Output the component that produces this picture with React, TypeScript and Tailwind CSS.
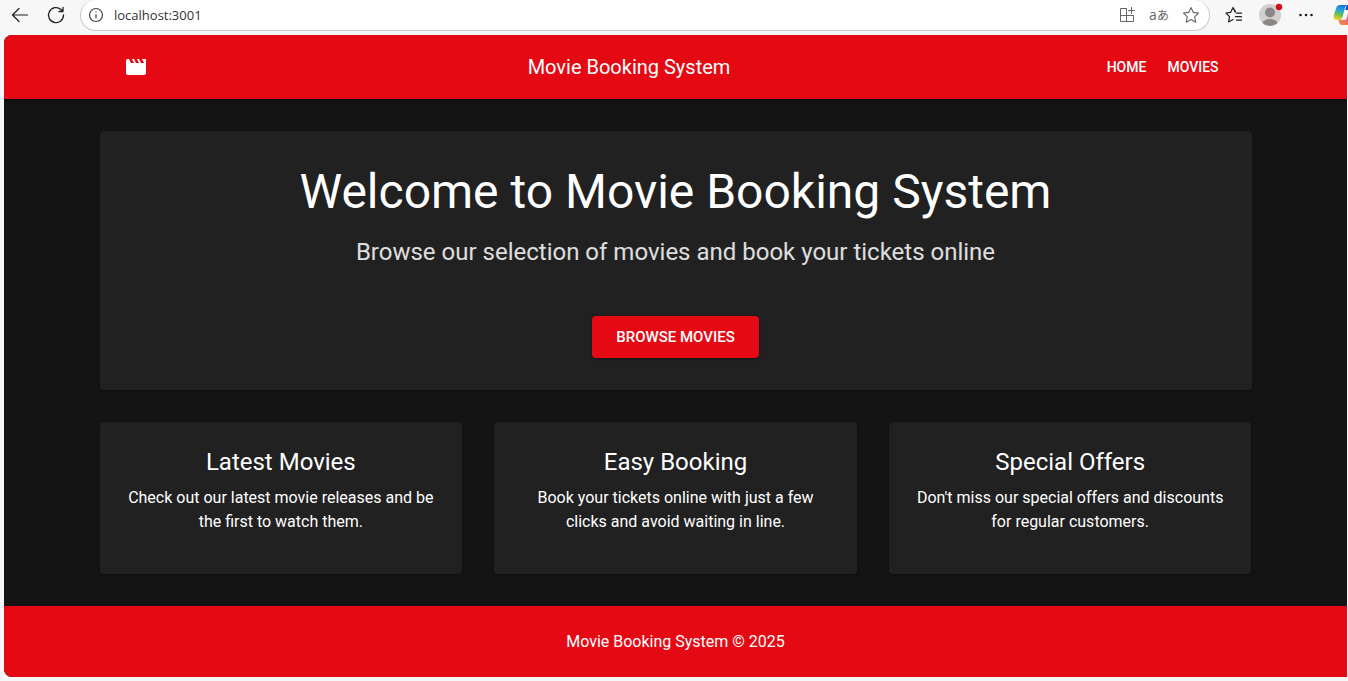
import type { ReactNode } from "react";

function LineIcon({ size, width = 1.2, children }: { size: number; width?: number; children: ReactNode }) {
  return (
    <svg
      width={size}
      height={size}
      viewBox={`0 0 ${size} ${size}`}
      fill="none"
      stroke="currentColor"
      strokeWidth={width}
      strokeLinecap="round"
      strokeLinejoin="round"
      aria-hidden="true"
      className="shrink-0"
    >
      {children}
    </svg>
  );
}

function CopilotIcon() {
  return (
    <svg width="24" height="22" viewBox="0 0 24 22" aria-hidden="true" className="shrink-0">
      <defs>
        <linearGradient id="left" x1="0.6" y1="0" x2="0.3" y2="1">
          <stop offset="0" stopColor="#1b6fe0" />
          <stop offset="0.35" stopColor="#22a6d8" />
          <stop offset="0.65" stopColor="#6cc04a" />
          <stop offset="1" stopColor="#f4d32c" />
        </linearGradient>
        <linearGradient id="right" x1="0.7" y1="0" x2="0.2" y2="1">
          <stop offset="0" stopColor="#a85be8" />
          <stop offset="0.5" stopColor="#ee5a90" />
          <stop offset="1" stopColor="#f58a35" />
        </linearGradient>
      </defs>
      <path d="M17 21H9c-2 0-2.600-1.500-3-3l-.5-2h2.500c2 0 3-1 3.500-3l1.500-5c.5-1.500 1.500-2 3-2h4.500c2.500 0 3.500 2 2.800 4.500L20.800 18c-.6 2-1.800 3-3.800 3Z" fill="url(#right)" />
      <path d="M7 1h8c-1.800 0-2.600 1.200-3 2.700L9.500 13c-.5 2-1.500 3-3.200 3H3.500C1 16 0 14 .7 11.500l2.500-7.500C3.800 2 5 1 7 1Z" fill="url(#left)" />
      <path d="M12.500 7c.4-.8 1.200-1 2-1h1.800l-2.700 8.500c-.4 1-1 1.500-2 1.500H8.800c.9-.6 1.400-1.500 1.700-2.500Z" fill="#f7f7f7" />
      <path d="M14.500 1c2 0 3.100 1.500 3.500 3l.5 2h-6.200l.7-2.500C13.300 2 13.700 1.200 14.500 1Z" fill="#1a4fc4" />
    </svg>
  );
}

function BrowserBar() {
  return (
    <div className="flex h-[35px] shrink-0 items-start overflow-hidden bg-[#f7f7f7] font-['Open_Sans',sans-serif] text-[#202020]">
      <div className="flex h-[30px] w-20 shrink-0 items-center gap-4 pl-[10px]">
        <button type="button" aria-label="Back">
          <LineIcon size={20}>
            <path d="M17.500 10H2.500M9 3.500 2.500 10 9 16.500" />
          </LineIcon>
        </button>
        <button type="button" aria-label="Refresh">
          <LineIcon size={20} width={1.3}>
            <path d="M17.500 10A7.500 7.500 0 1 1 15 4.500L17 6.500M17 2.500v4h-4" />
          </LineIcon>
        </button>
      </div>
      <div className="flex h-[31px] grow items-center rounded-full border border-t-0 border-[#c9c9c9] bg-white pr-[9px] pl-[7px]">
        <button type="button" aria-label="View site information" className="text-[#444444]">
          <LineIcon size={16}>
            <circle cx="8" cy="8" r="6.500" />
            <path d="M8 7.500v3.500M8 5v.2" />
          </LineIcon>
        </button>
        <input
          aria-label="Address"
          defaultValue="localhost:3001"
          className="min-w-0 grow bg-transparent pl-[10px] text-[13px] leading-5 text-[#333333] outline-none"
        />
        <div className="flex items-center gap-[14px] text-[#666666]">
          <button type="button" aria-label="App available">
            <LineIcon size={18} width={1}>
              <path d="M8.500 2.500h-6v13h13v-6M8.500 2.500v13M2.500 9.500h13M13.500 1.500v6M10.500 4.500h6" />
            </LineIcon>
          </button>
          <button
            type="button"
            aria-label="Translate"
            className="flex w-[18px] items-baseline justify-center font-['Open_Sans','Noto_Sans_CJK_JP',sans-serif] text-[14px] leading-5"
          >
            a<span className="text-[12px]">あ</span>
          </button>
          <button type="button" aria-label="Add to favorites">
            <LineIcon size={18} width={1.1}>
              <path d="m9 1.500 2.300 4.900 5.200.7-3.800 3.700 1 5.400L9 13.600l-4.700 2.600 1-5.400L1.500 7.100l5.200-.7Z" />
            </LineIcon>
          </button>
        </div>
      </div>
      <div className="flex h-[30px] shrink-0 items-center pl-[15px]">
        <button type="button" aria-label="Favorites">
          <LineIcon size={18}>
            <path d="M10.500 5.500 8 1.500 5.700 6.300 1 7l3.500 3.600-.9 5.400L8 13.500M8 1.500l2.200 4.700M11.500 7.200h5M10.500 10.700h6M11.500 14.200h5" />
          </LineIcon>
        </button>
        <button type="button" aria-label="Profile" className="ml-4">
          <svg width="24" height="24" viewBox="0 0 24 24" aria-hidden="true">
            <circle cx="11" cy="12" r="11" fill="#d2d0ce" />
            <circle cx="11" cy="9.500" r="5" fill="#8a8886" />
            <path d="M3.500 20c1-3 4-4 7.500-4s6.500 1 7.500 4A11 11 0 0 1 3.500 20Z" fill="#8a8886" />
            <circle cx="20" cy="4" r="3.200" fill="#d90d16" />
          </svg>
        </button>
        <button type="button" aria-label="Settings and more" className="ml-[14px]">
          <svg width="18" height="18" viewBox="0 0 18 18" fill="currentColor" aria-hidden="true">
            <circle cx="3.500" cy="9" r="1.300" />
            <circle cx="9" cy="9" r="1.300" />
            <circle cx="14.500" cy="9" r="1.300" />
          </svg>
        </button>
        <button type="button" aria-label="Copilot" className="-mr-[9px] ml-[18px]">
          <CopilotIcon />
        </button>
      </div>
    </div>
  );
}

const features = [
  { title: "Latest Movies", text: "Check out our latest movie releases and be the first to watch them." },
  { title: "Easy Booking", text: "Book your tickets online with just a few clicks and avoid waiting in line." },
  { title: "Special Offers", text: "Don't miss our special offers and discounts for regular customers." },
];

export default function App() {
  return (
    <div className="flex min-h-screen flex-col bg-[#f7f7f7]">
      <BrowserBar />
      <div className="mr-px mb-1 ml-1 flex grow flex-col overflow-hidden rounded-l-lg bg-[#141414] font-[Roboto,sans-serif] text-white">
        <header className="bg-[#e50914] shadow-sm shadow-black/40">
          <div className="mx-auto flex h-16 max-w-[1200px] items-center px-12">
            <svg width="24" height="24" viewBox="0 0 24 24" fill="currentColor" aria-hidden="true" className="mr-4 shrink-0">
              <path d="m18 4 2 4h-3l-2-4h-2l2 4h-3l-2-4H8l2 4H7L5 4H4c-1.100 0-1.990.9-1.990 2L2 18c0 1.100.9 2 2 2h16c1.100 0 2-.9 2-2V4h-4z" />
            </svg>
            <p className="grow text-center text-xl leading-8">Movie Booking System</p>
            <nav className="flex text-sm leading-6 font-medium">
              <a href="#home" className="min-w-16 px-2 py-1.5 text-center">HOME</a>
              <a href="#movies" className="min-w-[69px] px-2 py-1.5 text-center">MOVIES</a>
            </nav>
          </div>
        </header>
        <main className="mx-auto flex w-full max-w-[1200px] flex-col gap-8 px-6 py-8 text-center">
          <section className="rounded bg-[#212121] p-8 shadow-sm shadow-black/20">
            <h1 className="text-5xl leading-[57px]">Welcome to Movie Booking System</h1>
            <p className="mt-4 text-2xl leading-8 text-white/85">
              Browse our selection of movies and book your tickets online
            </p>
            <button
              type="button"
              className="mt-12 h-[42px] rounded bg-[#e50914] px-6 text-[15px] leading-[26px] font-medium shadow-sm shadow-black/40"
            >
              BROWSE MOVIES
            </button>
          </section>
          <div className="grid grid-cols-3 gap-8">
            {features.map((feature) => (
              <section key={feature.title} className="rounded bg-[#212121] px-6 pt-6 pb-10 shadow-sm shadow-black/20">
                <h2 className="text-2xl leading-8">{feature.title}</h2>
                <p className="mt-2 text-base leading-6">{feature.text}</p>
              </section>
            ))}
          </div>
        </main>
        <footer className="flex grow items-center justify-center bg-[#e50914] py-5">
          <p className="text-base leading-6">Movie Booking System © 2025</p>
        </footer>
      </div>
    </div>
  );
}
